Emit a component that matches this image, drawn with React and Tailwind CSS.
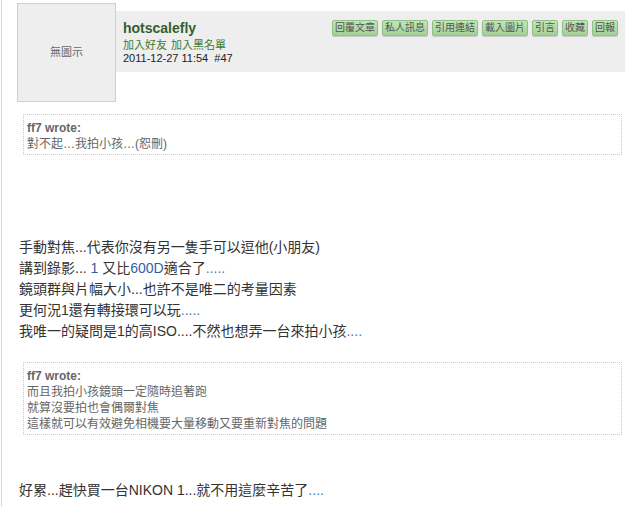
import React from 'react';

const buttons = ['回覆文章', '私人訊息', '引用連結', '載入圖片', '引言', '收藏', '回報'];

const Quote = ({ author, lines, className }) => (
  <div className={`ml-[21px] w-[599px] border border-dotted border-[#c8c8c8] px-[3px] pt-[5px] pb-[2px] text-[12px] leading-[16px] text-[#666] ${className}`}>
    <div className="font-bold text-[#666]">{author} wrote:</div>
    {lines.map((l) => (
      <div key={l}>{l}</div>
    ))}
  </div>
);

const App = () => {
  return (
    <div
      className="relative h-[506px] w-[640px] overflow-hidden bg-white"
      style={{ fontFamily: '"Liberation Sans", "Noto Sans CJK TC", sans-serif' }}
    >
      <div className="ml-[1px] h-full border-l border-[#d4d4d4]">
        {/* post header */}
        <div className="flex items-start pt-[3px]">
          <div className="ml-[15px] flex h-[99px] w-[99px] shrink-0 items-center justify-center border border-[#cfcfcf] bg-[#eeeeee] text-[11px] text-[#666]">
            無圖示
          </div>
          <div className="mt-[8px] flex h-[61px] w-[509px] justify-between bg-[#eeeeee] pl-[7px] pr-[7px]">
            <div className="pt-[9px]">
              <div className="text-[14px] font-bold leading-[16px] text-[#335f2c]">hotscalefly</div>
              <div className="mt-[3px] text-[11px] leading-[13px] text-[#3d7a35]">
                <span>加入好友</span>
                <span className="ml-[4px]">加入黑名單</span>
              </div>
              <div className="text-[11px] leading-[13px] text-[#222]">2011-12-27 11:54&nbsp;&nbsp;#47</div>
            </div>
            <div className="flex gap-[4px] pt-[9px]">
              {buttons.map((b) => (
                <span
                  key={b}
                  className="h-[16px] rounded-[2px] border border-[#8fc183] bg-gradient-to-b from-[#c1e6b8] to-[#a3d196] px-[2px] text-[10px] leading-[14px] text-[#555] shadow-[0_1px_1px_rgba(0,0,0,0.15)]"
                >
                  {b}
                </span>
              ))}
            </div>
          </div>
        </div>

        {/* post body */}
        <Quote author="ff7" lines={['對不起…我拍小孩…(恕刪)']} className="mt-[12px]" />

        <div className="mt-[82px] pl-[17px] text-[14px] leading-[21px] text-[#333]">
          <div>手動對焦...代表你沒有另一隻手可以逗他(小朋友)</div>
          <div>
            講到錄影... <span className="text-[#2f5fa8]">1</span> 又比<span className="text-[#2f5fa8]">600D</span>適合了<span className="text-[#4a7ab5]">.....</span>
          </div>
          <div>鏡頭群與片幅大小...也許不是唯二的考量因素</div>
          <div>更何況1還有轉接環可以玩<span className="text-[#4a7ab5]">.....</span></div>
          <div>我唯一的疑問是1的高ISO....不然也想弄一台來拍小孩<span className="text-[#4a7ab5]">....</span></div>
        </div>

        <Quote
          author="ff7"
          lines={['而且我拍小孩鏡頭一定隨時追著跑', '就算沒要拍也會偶爾對焦', '這樣就可以有效避免相機要大量移動又要重新對焦的問題']}
          className="mt-[20px]"
        />

        <div className="mt-[45px] pl-[17px] text-[14px] leading-[21px] text-[#333]">
          好累...趕快買一台NIKON 1...就不用這麼辛苦了<span className="text-[#4a7ab5]">....</span>
        </div>
      </div>
    </div>
  );
};

export default App;
